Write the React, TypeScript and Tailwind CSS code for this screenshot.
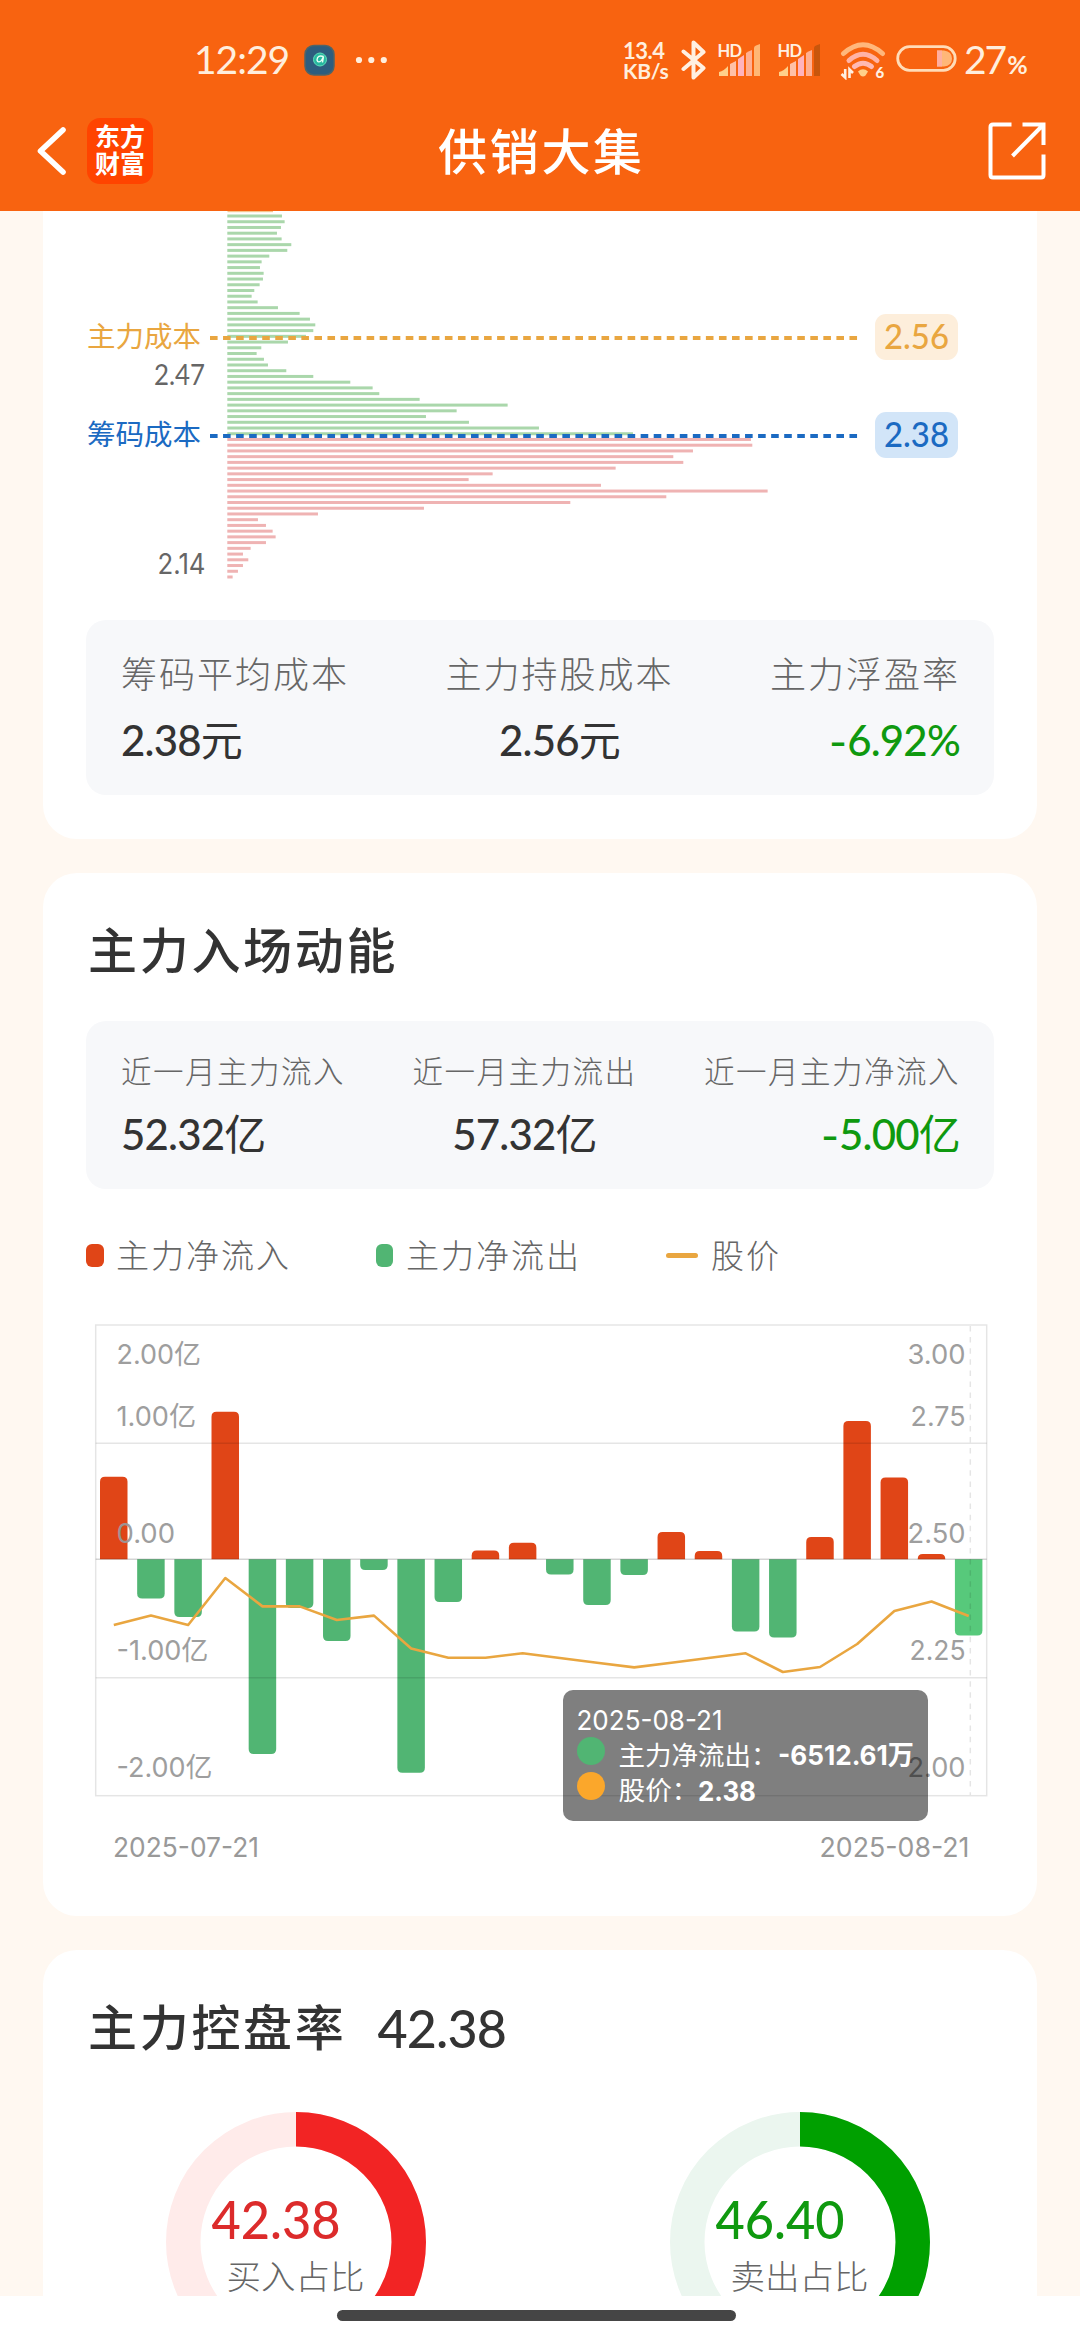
import React from "react";

const CJK = "Lato, 'Noto Sans CJK SC', sans-serif";
const WIDE = "Inter, 'Noto Sans CJK SC', sans-serif";

const COST_GREEN = [
  666, 674, 663, 651, 665, 694, 682, 628, 605, 600, 611, 609, 599, 583, 575, 593, 654, 719, 750, 766, 760, 738, 684,
  604, 590, 612, 624, 679, 760, 871, 938, 958, 1079, 1343, 1190, 1098, 1227, 1437, 1719,
];
const COST_RED = [
  2073, 2077, 1899, 1840, 1870, 1667, 1298, 1226, 1623, 2123, 1819, 1531, 1092, 774, 594, 618, 638, 647, 618, 572, 549,
  565, 549, 534, 518,
];
const COST_BARS = [...COST_GREEN, ...COST_RED].map((end, i) => ({
  y: 216 + i * 5.73,
  width: (end - 502) / 3,
  up: i < COST_GREEN.length,
}));

const ZERO = 1559.3;
const FLOW = [
  1476.8, 1598.6, 1617, 1411.7, 1754, 1608, 1641, 1570, 1772.8, 1602, 1550.5, 1542.7, 1574.5, 1605, 1575, 1532, 1551,
  1631.5, 1637.4, 1537, 1421, 1477.6, 1554, 1635.5,
];
const PRICE = [
  1625, 1615.6, 1625, 1578, 1606.4, 1606.4, 1620, 1615.6, 1648.5, 1657.7, 1657.7, 1653.3, 1658, 1662.7, 1667.4, 1662.7,
  1658, 1653.3, 1672, 1667, 1644, 1611, 1601.5, 1616,
];

type LabelProps = {
  x: number;
  y: number;
  w: number;
  size: number;
  fill: string;
  end?: boolean;
  weight?: number;
  wide?: boolean;
  children: string;
};

function Label({ x, y, w, size, fill, end, wide, weight = 400, children }: LabelProps) {
  return (
    <text
      x={x}
      y={y}
      fontSize={size}
      fontWeight={weight}
      fill={fill}
      textLength={w}
      lengthAdjust="spacingAndGlyphs"
      textAnchor={end ? "end" : "start"}
      fontFamily={wide ? WIDE : CJK}
    >
      {children}
    </text>
  );
}

function Signal({ weak = false }: { weak?: boolean }) {
  return (
    <svg width="44" height="36" viewBox="0 0 44 36" className="overflow-visible">
      <path d="M1 34v-4q5-1 9-6v10z" fill="#ffd08a" />
      <path d="M12 34V22l6-3v15z" fill="#ffc0a6" />
      <path d="M20 34V17l6-4v21z" fill="#ffb3bd" />
      <path d="M28 34V11q3-2 6-3v26z" fill="#ffb092" />
      <path d="M36 34V6q0-2 2-2.500 2-1 4-1.500v32z" fill={weak ? "#c8560c" : "#ffb775"} />
      <text
        x="-0.500"
        y="14.500"
        fontSize="16.500"
        fontWeight="700"
        fill="#fff0e2"
        stroke="#f86310"
        strokeWidth="1.500"
        paintOrder="stroke"
        textLength="24.500"
        fontFamily="Lato"
      >
        HD
      </text>
    </svg>
  );
}

function StatusBar() {
  return (
    <div className="flex h-[90px] items-start text-[#ffeedd]">
      <div className="ml-[194px] mt-[35px] w-[90px] whitespace-nowrap text-[39px] leading-[48px] tracking-[-1px]">12:29</div>
      <svg className="ml-[20px] mt-[43px]" width="32" height="34" viewBox="0 0 32 34">
        <rect x="1" y="2.500" width="29" height="29.500" rx="9" fill="#2d5d7e" stroke="#4f6467" strokeWidth="1.500" />
        <circle cx="16" cy="16.500" r="6.500" fill="#26b8a0" stroke="#5fe0b8" />
        <path d="M19.500 13.500q-6-2-6.500 3.500 1 3.500 4.500.500l2-4-1 6" fill="none" stroke="#e8fff4" strokeWidth="1.400" />
      </svg>
      <svg className="ml-[19px] mt-[54px]" width="34" height="12">
        <circle cx="4" cy="6" r="3.100" fill="#ffeedd" />
        <circle cx="16.300" cy="6" r="3.100" fill="#ffeedd" />
        <circle cx="28.800" cy="6" r="3.100" fill="#ffeedd" />
      </svg>
      <div className="ml-[234px] mt-[41px] w-[47px] whitespace-nowrap font-bold">
        <div className="h-[20px] text-[22px] leading-[20px] tracking-[-0.5px]">13.4</div>
        <div className="h-[20px] text-[21px] leading-[20px] tracking-[-0.2px]">KB/s</div>
      </div>
      <svg className="ml-[11px] mt-[39px]" width="27" height="42" viewBox="0 0 27 42">
        <path
          d="M2.500 12.500 22.500 29 12.500 38.500V3.500L22.500 13 2.500 30"
          fill="none"
          stroke="#fff0e2"
          strokeWidth="4"
          strokeLinejoin="round"
          strokeLinecap="round"
        />
      </svg>
      <div className="ml-[10px] mt-[42px]">
        <Signal />
      </div>
      <div className="ml-[16px] mt-[42px]">
        <Signal weak />
      </div>
      <svg className="ml-[18px] mt-[42px]" width="46" height="38" viewBox="0 0 46 38">
        <g fill="none" strokeWidth="5" strokeLinecap="round">
          <path d="M3.500 11.500Q23-6 42.500 11.500" stroke="#ffb77c" />
          <path d="M9 18.500Q23 6 37 18.500" stroke="#ffb3a6" />
          <path d="M14.500 24.500q8.500-6.500 17 0" stroke="#ffb9b4" />
        </g>
        <path d="M18 29.500q5-4.500 10 0l-2.500 4q-2.500 2-5 0z" fill="#ffd08a" />
        <path d="M5.200 27v8.500L1.500 32M9.500 36v-8.500l3.500 3.500" fill="none" stroke="#fff0e2" strokeWidth="2.600" />
        <text x="35.500" y="36" fontSize="15" fontWeight="900" fill="#fff0e2" fontFamily="Lato">
          6
        </text>
      </svg>
      <svg className="ml-[10px] mt-[45px]" width="62" height="28" viewBox="0 0 62 28">
        <rect x="1.700" y="1.700" width="57.500" height="23.600" rx="11.800" fill="none" stroke="#ffdcb8" strokeWidth="2.800" />
        <path d="M41 5.500h7q8 1 8 8t-8 8h-7z" fill="#ffb778" />
        <path d="M41 5.500h5v16h-5z" fill="#ffafa0" />
      </svg>
      <div className="ml-[6px] mt-[35px] whitespace-nowrap text-[39px] leading-[48px] tracking-[-2px]">
        27<span className="ml-[2px] text-[25px] font-bold">%</span>
      </div>
    </div>
  );
}

function NavBar() {
  return (
    <div className="flex h-[121px] items-center">
      <svg className="ml-[34px]" width="36" height="56" viewBox="0 0 36 56">
        <path d="M29 7 6.500 28 29 49" fill="none" stroke="#fff" strokeWidth="5.600" strokeLinecap="round" strokeLinejoin="round" />
      </svg>
      <div className="ml-[17px] flex h-[66px] w-[66px] flex-col items-center justify-center rounded-[13px] bg-[#ff4400] text-[25px] font-bold leading-[27px] text-white">
        <div className="-mt-[1px]">东方</div>
        <div>财富</div>
      </div>
      <div className="ml-[285px] w-[549px] text-[49px] font-medium leading-[60px] tracking-[2.700px] text-white">供销大集</div>
      <svg width="60" height="60" viewBox="0 0 60 60" fill="none" stroke="#fff" strokeWidth="4">
        <path d="M24.500 3.500H6Q3.500 3.500 3.500 6v48q0 2.500 2.500 2.500h48q2.500 0 2.500-2.500V33.500" />
        <path d="M35.500 3.500h21V24M56.500 3.500 25.500 35" />
      </svg>
    </div>
  );
}

function CostChart() {
  return (
    <svg width="994" height="409" viewBox="43 211 994 409" className="block">
      <rect x="227.500" y="211" width="45.500" height="1.200" fill="#f6c78f" />
      {COST_BARS.map((b, i) => (
        <rect key={i} x="227.300" y={b.y - 1.5} width={b.width} height="3" fill={b.up ? "#aad7ab" : "#efb3b3"} />
      ))}
      <path d="M210 338H858" stroke="#e9a640" strokeWidth="4" strokeDasharray="7.600 5.450" />
      <path d="M210 436H858" stroke="#1b6ac2" strokeWidth="4" strokeDasharray="7.600 5.450" />
      <Label x={87} y={347} w={114} size={28} fill="#e9a640">主力成本</Label>
      <Label x={87} y={445} w={114} size={28} fill="#1b6ac2">筹码成本</Label>
      <Label x={205} y={385} w={51} size={28} fill="#666" end>2.47</Label>
      <Label x={205.5} y={574} w={48} size={28} fill="#666" end wide>2.14</Label>
      <rect x="875" y="314" width="83" height="46" rx="11" fill="#fdeedb" />
      <rect x="875" y="412" width="83" height="46" rx="11" fill="#d2e5f8" />
      <Label x={884} y={349} w={65} size={35} fill="#e9a640" weight={500}>2.56</Label>
      <Label x={884} y={447} w={65} size={35} fill="#1b6ac2" weight={500}>2.38</Label>
    </svg>
  );
}

function FlowChart() {
  const bars = FLOW.map((v, i) => {
    const x = 100 + i * 37.17;
    const up = v < ZERO;
    const r = Math.min(5, Math.abs(v - ZERO));
    const s = up ? 1 : -1;
    const d = `M${x} ${ZERO}V${v + s * r}Q${x} ${v} ${x + r} ${v}H${x + 27.5 - r}Q${x + 27.5} ${v} ${x + 27.5} ${v + s * r}V${ZERO}Z`;
    return { d, fill: up ? "#e04517" : i === 23 ? "#57c97b" : "#51b573" };
  });
  const line = PRICE.map((y, i) => `${113.8 + i * 37.17},${y}`).join(" ");
  return (
    <svg width="994" height="550" viewBox="43 1321 994 550" className="block">
      {bars.map((b, i) => (
        <path key={i} d={b.d} fill={b.fill} />
      ))}
      <g stroke="#000" strokeOpacity="0.1" strokeWidth="1.500" fill="none">
        <rect x="95.700" y="1325" width="891" height="470.700" />
        <path d="M95.700 1443.200h891M95.700 1677.700h891" />
        <path d="M95.700 1559.300h891" strokeOpacity="0.17" />
        <path d="M970.300 1326V1795" strokeDasharray="5.500 5.600" />
      </g>
      <polyline points={line} fill="none" stroke="#e9a640" strokeWidth="2.600" strokeLinejoin="round" />
      <g opacity="0.95">
        <Label wide x={116.5} y={1363.5} w={84.5} size={27.5} fill="#999">2.00亿</Label>
        <Label wide x={116.5} y={1425.5} w={79.5} size={27.5} fill="#999">1.00亿</Label>
        <Label wide x={116.5} y={1542.5} w={58.5} size={27.5} fill="#999">0.00</Label>
        <Label wide x={116.5} y={1660} w={92} size={27.5} fill="#999">-1.00亿</Label>
        <Label wide x={116.5} y={1777} w={96} size={27.5} fill="#999">-2.00亿</Label>
        <Label wide x={965.5} y={1363.5} w={58} size={27.5} fill="#999" end>3.00</Label>
        <Label wide x={965.5} y={1425.5} w={55} size={27.5} fill="#999" end>2.75</Label>
        <Label wide x={965.5} y={1542.5} w={58} size={27.5} fill="#999" end>2.50</Label>
        <Label wide x={965.5} y={1660} w={56} size={27.5} fill="#999" end>2.25</Label>
        <Label wide x={965.5} y={1777} w={58} size={27.5} fill="#999" end>2.00</Label>
      </g>
      <Label wide x={113} y={1857} w={146} size={27.5} fill="#999">2025-07-21</Label>
      <Label wide x={969.5} y={1857} w={150} size={27.5} fill="#999" end>2025-08-21</Label>
      <rect x="563" y="1690" width="365" height="131" rx="10" fill="#000" fillOpacity="0.5" />
      <Label wide x={576.5} y={1730} w={146} size={27.5} fill="#fff">2025-08-21</Label>
      <circle cx="591" cy="1751" r="14" fill="#51b573" />
      <circle cx="591" cy="1786" r="14" fill="#fba72b" />
      <Label x={618.5} y={1764.5} w={159} size={26} fill="#fff">主力净流出：</Label>
      <Label wide x={778} y={1765} w={136} size={27} weight={700} fill="#fff">-6512.61万</Label>
      <Label x={618.5} y={1800} w={80} size={26} fill="#fff">股价：</Label>
      <Label wide x={698} y={1800.5} w={58} size={27} weight={700} fill="#fff">2.38</Label>
    </svg>
  );
}

type Stat = { label: string; value: string; unit?: string; down?: boolean };

function Stats({ items, small = false }: { items: Stat[]; small?: boolean }) {
  const align = ["items-start", "items-center", "items-end"];
  return (
    <div
      className={`mx-[43px] flex justify-between rounded-[20px] bg-[#f7f8fa] pl-[35px] pr-[34px] ${
        small ? "h-[168px] pt-[30px]" : "h-[175px] pt-[32px]"
      }`}
    >
      {items.map((s, i) => (
        <div key={s.label} className={`flex flex-col ${align[i]}`}>
          <div
            className={
              small
                ? "h-[40px] whitespace-nowrap text-[30.500px] font-light leading-[40px] tracking-[1.500px] text-[#666]"
                : "h-[44px] whitespace-nowrap text-[36px] font-light leading-[44px] tracking-[2px] text-[#666]"
            }
          >
            {s.label}
          </div>
          <div
            className={`whitespace-nowrap text-[42px] font-medium leading-[50px] tracking-[-0.8px] ${
              small ? "mt-[18px]" : "mt-[19px]"
            } ${s.down ? "text-[#0f990f]" : "text-[#333]"}`}
          >
            {s.down && <span className="mr-[1px] font-['Inter'] text-[38px]">-</span>}
            {s.value}
            {s.unit && <span className="font-normal">{s.unit}</span>}
          </div>
        </div>
      ))}
    </div>
  );
}

function Legend() {
  return (
    <div className="flex h-[132px] items-center pl-[43px] text-[33px] font-light leading-[44px] tracking-[2px] text-[#666]">
      <span className="h-[23px] w-[18px] rounded-[6px] bg-[#e04517]" />
      <span className="ml-[12px] w-[260px]">主力净流入</span>
      <span className="h-[23px] w-[17px] rounded-[6px] bg-[#51b573]" />
      <span className="ml-[13px] w-[260px]">主力净流出</span>
      <span className="h-[5px] w-[32px] rounded-sm bg-[#e9a640]" />
      <span className="ml-[13px]">股价</span>
    </div>
  );
}

type RingProps = { value: string; label: string; color: string; track: string; text: string };

function Ring({ value, label, color, track, text }: RingProps) {
  const c = 2 * Math.PI * 112.75;
  return (
    <svg width="262" height="262" viewBox="-131 -131 262 262" className="block">
      <circle r="112.750" fill="none" stroke={track} strokeWidth="34.500" />
      <circle
        r="112.750"
        fill="none"
        stroke={color}
        strokeWidth="34.500"
        strokeDasharray={`${(c * parseFloat(value)) / 100} ${c}`}
        transform="rotate(-90)"
      />
      <Label x={-84.5} y={-3} w={129} size={52} weight={500} fill={text}>{value}</Label>
      <Label x={-69.5} y={47} w={138} size={33.5} weight={300} fill="#666">{label}</Label>
    </svg>
  );
}

export default function App() {
  return (
    <div
      lang="zh-CN"
      className="flex h-[2340px] w-[1080px] flex-col overflow-hidden bg-white font-['Lato','Noto_Sans_CJK_SC',sans-serif]"
    >
      <header className="h-[211px] shrink-0 bg-[#f86310]">
        <StatusBar />
        <NavBar />
      </header>
      <main className="flex h-[2085px] shrink-0 flex-col gap-[34px] overflow-hidden bg-[#fff8f1] px-[43px]">
        <section className="h-[628px] shrink-0 rounded-b-[34px] bg-white">
          <CostChart />
          <Stats
            items={[
              { label: "筹码平均成本", value: "2.38", unit: "元" },
              { label: "主力持股成本", value: "2.56", unit: "元" },
              { label: "主力浮盈率", value: "6.92%", down: true },
            ]}
          />
        </section>
        <section className="h-[1043px] shrink-0 rounded-[34px] bg-white">
          <h2 className="flex h-[148px] items-center pl-[45px] pt-2 text-[49px] font-medium tracking-[2.700px] text-[#333]">
            主力入场动能
          </h2>
          <Stats
            small
            items={[
              { label: "近一月主力流入", value: "52.32", unit: "亿" },
              { label: "近一月主力流出", value: "57.32", unit: "亿" },
              { label: "近一月主力净流入", value: "5.00", unit: "亿", down: true },
            ]}
          />
          <Legend />
          <FlowChart />
        </section>
        <section className="h-[500px] shrink-0 rounded-t-[34px] bg-white">
          <h2 className="flex h-[148px] items-center pl-[45px] pt-2 text-[49px] font-medium tracking-[2.700px] text-[#333]">
            主力控盘率<span className="ml-[31px] text-[52px] tracking-[-0.9px]">42.38</span>
          </h2>
          <div className="flex gap-[242px] pl-[122px] pt-[13px]">
            <Ring value="42.38" label="买入占比" color="#f22424" track="#ffebea" text="#dc2b2b" />
            <Ring value="46.40" label="卖出占比" color="#00a000" track="#ebf6ef" text="#0f990f" />
          </div>
        </section>
      </main>
      <footer className="flex justify-center pt-[14px]">
        <div className="-ml-[7px] h-[11px] w-[399px] rounded-full bg-[#454545]" />
      </footer>
    </div>
  );
}
